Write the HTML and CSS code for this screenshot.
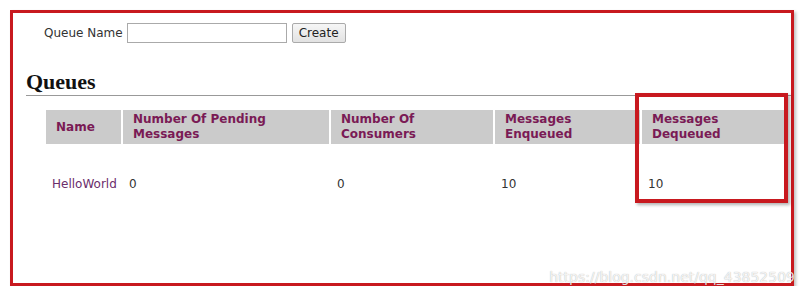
FILE: index.html
```html
<!DOCTYPE html>
<html lang="en">
<head>
    <meta charset="UTF-8">
    <title>Queues</title>
    <link rel="stylesheet" href="styles.css">
</head>
<body>
    <div class="frame">
        <form class="create-form">
            <label for="queue-name">Queue Name</label>
            <input type="text" id="queue-name" class="text-input">
            <button type="button" class="button">Create</button>
        </form>

        <h2>Queues</h2>

        <table class="queues">
            <thead>
                <tr>
                    <th class="col-name">Name</th>
                    <th class="col-pending">Number Of Pending Messages</th>
                    <th class="col-consumers">Number Of Consumers</th>
                    <th class="col-enqueued">Messages Enqueued</th>
                    <th class="col-dequeued">Messages Dequeued</th>
                </tr>
            </thead>
            <tbody>
                <tr>
                    <td><a href="#">HelloWorld</a></td>
                    <td>0</td>
                    <td>0</td>
                    <td>10</td>
                    <td>10</td>
                </tr>
            </tbody>
        </table>

        <!-- annotation box over the last column -->
        <div class="highlight"></div>
        <div class="watermark">https://blog.csdn.net/qq_43852509</div>
    </div>
</body>
</html>
```

FILE: styles.css
```css
body {
    margin: 0;
    background-color: #fff;
    font-family: "DejaVu Sans", Verdana, sans-serif;
    color: #333;
}

.frame {
    position: relative;
    box-sizing: border-box;
    width: 784px;
    height: 276px;
    margin: 10px 0 0 10px;
    border: 3px solid #c8191f;
    box-shadow: 2px 2px 3px rgba(0, 0, 0, 0.25);
}

.create-form {
    display: flex;
    align-items: center;
    gap: 4px;
    margin: 10px 0 0 31px;
    font-size: 12px;
}

.create-form label {
    color: #333;
}

.text-input {
    box-sizing: border-box;
    width: 160px;
    height: 20px;
    margin: 0;
    border: 1px solid #aaa;
    padding: 0 3px;
}

.button {
    box-sizing: border-box;
    height: 20px;
    margin-left: 1px;
    padding: 0 6px;
    border: 1px solid #aaa;
    border-radius: 2px;
    background: linear-gradient(#f6f6f6, #e2e2e2);
    font-family: "DejaVu Sans", Verdana, sans-serif;
    font-size: 12px;
    color: #222;
}

h2 {
    margin: 27px 0 0 13px;
    padding-bottom: 1px;
    border-bottom: 1px solid #999;
    font-family: "Liberation Serif", Georgia, serif;
    font-size: 22px;
    line-height: 24px;
    color: #111;
}

.queues {
    table-layout: fixed;
    width: 744px;
    margin: 12px 0 0 31px;
    border-spacing: 2px;
    font-size: 12px;
    line-height: 15px;
}

.queues th {
    box-sizing: border-box;
    padding: 2px 6px 2px 10px;
    background-color: #cbcbcb;
    color: #7a1a55;
    text-align: left;
    vertical-align: middle;
}

.col-name { width: 75px; }
.col-pending { width: 206px; }
.col-consumers { width: 162px; }
.col-enqueued { width: 145px; }
.col-dequeued { width: 144px; }

.queues td {
    padding: 31px 2px 29px 6px;
    vertical-align: middle;
    white-space: nowrap;
}

.queues a {
    color: #6b2d6b;
    text-decoration: none;
}

.highlight {
    position: absolute;
    left: 622px;
    top: 80px;
    box-sizing: border-box;
    width: 153px;
    height: 110px;
    border: 4px solid #c8191f;
    box-shadow: 2px 2px 3px rgba(0, 0, 0, 0.3);
}

.watermark {
    position: absolute;
    right: -4px;
    bottom: -2px;
    font-family: "DejaVu Sans", sans-serif;
    font-size: 14px;
    color: rgba(255, 255, 255, 0.85);
    text-shadow: 0 0 1px rgba(0, 0, 0, 0.35);
}
```
